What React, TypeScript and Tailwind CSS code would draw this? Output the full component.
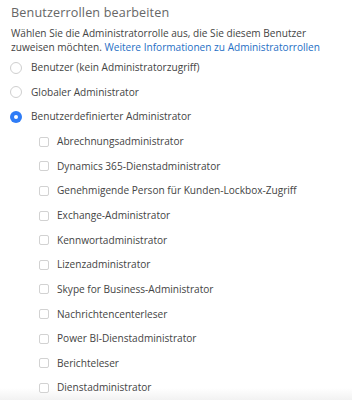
const roles = [
  'Abrechnungsadministrator',
  'Dynamics 365-Dienstadministrator',
  'Genehmigende Person für Kunden-Lockbox-Zugriff',
  'Exchange-Administrator',
  'Kennwortadministrator',
  'Lizenzadministrator',
  'Skype for Business-Administrator',
  'Nachrichtencenterleser',
  'Power BI-Dienstadministrator',
  'Berichteleser',
  'Dienstadministrator',
];

const Radio = ({ checked, label }: { checked?: boolean; label: string }) => (
  <div className="flex h-[24.6px] items-center">
    {checked ? (
      <span className="ml-[10px] flex h-[12px] w-[12px] items-center justify-center rounded-full bg-[#2f7cf6]">
        <span className="h-[4px] w-[4px] rounded-full bg-white"></span>
      </span>
    ) : (
      <span className="ml-[10px] h-[12px] w-[12px] rounded-full border border-[#cfcfcf] bg-white"></span>
    )}
    <span className="ml-[9px]">{label}</span>
  </div>
);

const App = () => {
  return (
    <div
      className="h-[400px] w-[352px] overflow-hidden bg-[linear-gradient(to_bottom,#ffffff_388px,#f2f2f2_400px)] text-[10.1px] text-[#444]"
      style={{ fontFamily: '"Open Sans", "Noto Sans", sans-serif' }}
    >
      <div className="px-[11px] pt-[3px]">
        <h2 className="text-[12.6px] leading-[20px] tracking-[0.15px] text-[#666]">
          Benutzerrollen bearbeiten
        </h2>
        <p className="mt-[2.5px] leading-[14.5px]">
          Wählen Sie die Administratorrolle aus, die Sie diesem Benutzer
          <br />
          zuweisen möchten.{' '}
          <a className="text-[#1f6fc5]">Weitere Informationen zu Administratorrollen</a>
        </p>
      </div>
      <div className="mt-[1px]">
        <Radio label="Benutzer (kein Administratorzugriff)" />
        <Radio label="Globaler Administrator" />
        <Radio checked label="Benutzerdefinierter Administrator" />
        {roles.map((r) => (
          <div key={r} className="flex h-[24.65px] items-center pl-[39px]">
            <span className="h-[10px] w-[10px] rounded-[2px] border border-[#d2d2d2] bg-white"></span>
            <span className="ml-[8px]">{r}</span>
          </div>
        ))}
      </div>
    </div>
  );
};

export default App;
